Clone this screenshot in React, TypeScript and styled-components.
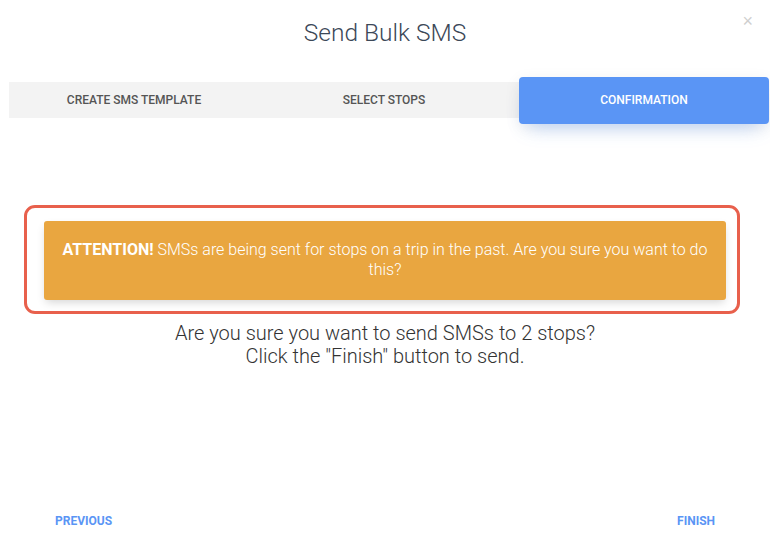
import React from 'react'
import styled, { createGlobalStyle } from 'styled-components'

const GlobalStyle = createGlobalStyle`
  html, body {
    margin: 0;
    padding: 0;
    background: #fff;
    font-family: Roboto, "Helvetica Neue", Arial, sans-serif;
  }
`

const Modal = styled.div`
  width: 770px;
  height: 546px;
  display: flex;
  flex-direction: column;
  position: relative;
  box-sizing: border-box;
`

const Header = styled.div`
  padding-top: 19px;
  display: flex;
  justify-content: center;
`

const Title = styled.h4`
  margin: 0;
  font-size: 24.5px;
  line-height: 28px;
  font-weight: 300;
  color: #3c4858;
`

const Close = styled.button`
  position: absolute;
  top: 12px;
  right: 17px;
  border: 0;
  background: none;
  padding: 0;
  font-size: 18px;
  line-height: 18px;
  color: #cfcfcf;
  font-family: Arial, sans-serif;
  font-weight: 300;
`

const Nav = styled.div`
  margin: 35px 0 0 9px;
  width: 760px;
  height: 36px;
  background: #f3f3f3;
  display: flex;
  align-items: center;
`

const Tab = styled.div<{ $active?: boolean }>`
  flex: 0 0 250px;
  box-sizing: border-box;
  height: ${(p) => (p.$active ? '47px' : '36px')};
  margin-left: ${(p) => (p.$active ? '10px' : '0')};
  display: flex;
  align-items: center;
  justify-content: center;
  font-size: 12px;
  font-weight: 500;
  text-transform: uppercase;
  color: ${(p) => (p.$active ? '#fff' : '#555')};
  background: ${(p) => (p.$active ? '#5a95f5' : 'transparent')};
  border-radius: ${(p) => (p.$active ? '4px' : '0')};
  box-shadow: ${(p) =>
    p.$active
      ? '0 12px 20px -10px rgba(90, 149, 245, 0.4), 0 4px 16px 0 rgba(0, 0, 0, 0.08)'
      : 'none'};
`

const Body = styled.div`
  flex: 1;
  display: flex;
  flex-direction: column;
  align-items: center;
  padding-top: 87px;
`

const Outline = styled.div`
  align-self: flex-start;
  width: 716px;
  box-sizing: border-box;
  margin-left: 24px;
  border: 3px solid #e8604c;
  border-radius: 11px;
  padding: 13px 11px 11px 17px;
`

const Alert = styled.div`
  background: #e9a640;
  border-radius: 3px;
  box-shadow: 0 4px 10px -2px rgba(0, 0, 0, 0.18);
  padding: 19px 16px 20px;
  color: #fff;
  font-size: 16px;
  font-weight: 300;
  line-height: 20px;
  text-align: center;

  b {
    font-weight: 700;
  }
`

const Question = styled.p`
  margin: 8px 0 0;
  font-size: 20px;
  font-weight: 300;
  line-height: 23px;
  color: #333;
  text-align: center;
`

const Footer = styled.div`
  display: flex;
  justify-content: space-between;
  padding: 0 55px 18px;
`

const Action = styled.button`
  border: 0;
  background: none;
  padding: 0;
  font-family: Roboto, Arial, sans-serif;
  font-size: 12px;
  font-weight: 700;
  text-transform: uppercase;
  color: #5a95f5;
  line-height: 14px;
`

const App: React.FC = () => {
  return (
    <>
      <GlobalStyle />
      <Modal>
        <Close>×</Close>
        <Header>
          <Title>Send Bulk SMS</Title>
        </Header>
        <Nav>
          <Tab>Create SMS Template</Tab>
          <Tab>Select Stops</Tab>
          <Tab $active>Confirmation</Tab>
        </Nav>
        <Body>
          <Outline>
            <Alert>
              <b>ATTENTION!</b> SMSs are being sent for stops on a trip in the
              past. Are you sure you want to do this?
            </Alert>
          </Outline>
          <Question>
            Are you sure you want to send SMSs to 2 stops?
            <br />
            Click the "Finish" button to send.
          </Question>
        </Body>
        <Footer>
          <Action>Previous</Action>
          <Action>Finish</Action>
        </Footer>
      </Modal>
    </>
  )
}

export default App
